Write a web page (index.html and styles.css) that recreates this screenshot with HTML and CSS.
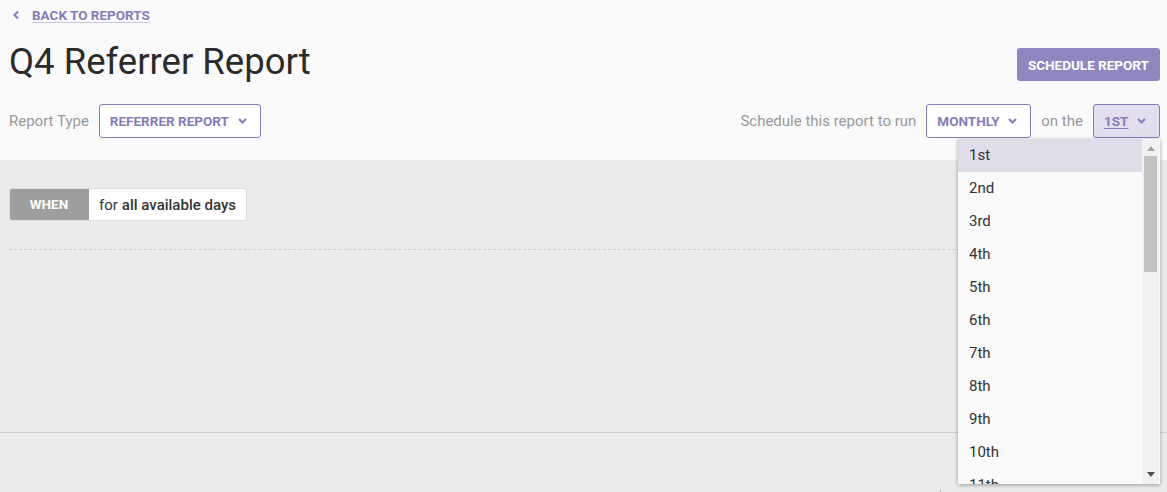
FILE: index.html
```html
<!DOCTYPE html>
<html>
<head>
<meta charset="utf-8">
<link rel="stylesheet" href="styles.css">
</head>
<body>
<div class="page">
  <header class="header">
    <a class="back" href="#">
      <svg class="back-icon" width="8" height="10" viewBox="0 0 8 10"><path d="M6 1.5L2.5 5 6 8.5" fill="none" stroke="#877cb9" stroke-width="2"/></svg>
      <span class="back-text">BACK TO REPORTS</span>
    </a>
    <div class="title-row">
      <h1 class="title">Q4 Referrer Report</h1>
      <button class="btn-primary">SCHEDULE REPORT</button>
    </div>
    <div class="controls">
      <div class="control-group">
        <span class="label">Report Type</span>
        <div class="select select-type">
          <span>REFERRER REPORT</span>
          <svg class="chev" width="9" height="6" viewBox="0 0 9 6"><path d="M1 1l3.5 3.5L8 1" fill="none" stroke="#877cb9" stroke-width="2"/></svg>
        </div>
      </div>
      <div class="control-group">
        <span class="label">Schedule this report to run</span>
        <div class="select select-month">
          <span>MONTHLY</span>
          <svg class="chev" width="9" height="6" viewBox="0 0 9 6"><path d="M1 1l3.5 3.5L8 1" fill="none" stroke="#877cb9" stroke-width="2"/></svg>
        </div>
        <span class="label">on the</span>
        <div class="anchor">
          <div class="select select-day">
            <span class="underline">1ST</span>
            <svg class="chev" width="9" height="6" viewBox="0 0 9 6"><path d="M1 1l3.5 3.5L8 1" fill="none" stroke="#877cb9" stroke-width="2"/></svg>
          </div>
          <div class="dropdown">
            <ul class="options">
              <li class="option active">1st</li>
              <li class="option">2nd</li>
              <li class="option">3rd</li>
              <li class="option">4th</li>
              <li class="option">5th</li>
              <li class="option">6th</li>
              <li class="option">7th</li>
              <li class="option">8th</li>
              <li class="option">9th</li>
              <li class="option">10th</li>
              <li class="option">11th</li>
            </ul>
            <div class="scrollbar">
              <svg class="arrow arrow-up" width="8" height="5" viewBox="0 0 8 5"><path d="M0 5L4 0 8 5z" fill="#a3a3a3"/></svg>
              <div class="thumb"></div>
              <div class="track-fill"></div>
              <svg class="arrow arrow-down" width="8" height="5" viewBox="0 0 8 5"><path d="M0 0L4 5 8 0z" fill="#505050"/></svg>
            </div>
          </div>
        </div>
      </div>
    </div>
  </header>
  <main class="body">
    <div class="when">
      <span class="when-tag">WHEN</span>
      <span class="when-text">for <strong>all available days</strong></span>
    </div>
    <div class="dashed"></div>
    <div class="spacer"></div>
    <div class="solid"></div>
    <div class="tick"></div>
  </main>
</div>
</body>
</html>
```
FILE: styles.css
```css
* { box-sizing: border-box; }
html, body { margin: 0; padding: 0; }
body {
  font-family: Roboto, "Noto Sans", sans-serif;
  color: #333;
  background: #ebebeb;
  width: 1167px;
  height: 492px;
  overflow: hidden;
}
.header {
  background: #fafafa;
  height: 160px;
  padding: 7px 7px 0 9px;
}
.back {
  display: flex;
  align-items: center;
  height: 16px;
  text-decoration: none;
  color: #877cb9;
}
.back-icon { margin-left: 3px; margin-right: 12px; }
.back-text {
  font-size: 13.5px;
  font-weight: 700;
  border-bottom: 1px solid #c9c3e0;
  line-height: 14px;
}
.title-row {
  display: flex;
  justify-content: space-between;
  align-items: flex-start;
  margin-top: 18px;
  height: 47px;
}
.title {
  margin: 0;
  font-size: 36.5px;
  font-weight: 400;
  line-height: 42px;
  color: #2b2b2b;
}
.btn-primary {
  margin-top: 7px;
  height: 33px;
  padding: 0 11px;
  border: none;
  border-radius: 3px;
  background: #9087c0;
  color: #fff;
  font-family: Roboto, sans-serif;
  font-size: 13.5px;
  font-weight: 700;
}
.controls {
  display: flex;
  justify-content: space-between;
  align-items: center;
  margin-top: 16px;
}
.control-group {
  display: flex;
  align-items: center;
  gap: 10px;
}
.label {
  font-size: 15px;
  color: #999;
}
.select {
  display: flex;
  align-items: center;
  justify-content: space-between;
  height: 34px;
  border: 1px solid #877cb9;
  border-radius: 3px;
  background: #fff;
  color: #877cb9;
  font-size: 13.5px;
  font-weight: 700;
  padding: 0 13px 1px 10px;
}
.select-type { width: 162px; }
.select-month { width: 105px; }
.select-day { width: 67px; background: #e2deed; }
.underline { text-decoration: underline; text-underline-offset: 2px; }
.anchor { position: relative; }
.dropdown {
  position: absolute;
  top: 35px;
  right: 0;
  width: 202px;
  height: 345px;
  background: #fafafa;
  box-shadow: 0 1px 4px rgba(0,0,0,0.35);
  display: flex;
  z-index: 10;
}
.options {
  list-style: none;
  margin: 0;
  padding: 0;
  flex: 1;
  overflow: hidden;
}
.option {
  height: 33px;
  line-height: 33px;
  padding-left: 11px;
  font-size: 15px;
  color: #333;
}
.option.active { background: #e0dce9; }
.scrollbar {
  width: 17px;
  margin-right: 1px;
  background: #f1f1f1;
  display: flex;
  flex-direction: column;
  align-items: center;
}
.arrow { flex: none; }
.arrow-up { margin: 7px 0 5px; }
.arrow-down { margin: 6px 0 7px; }
.thumb {
  width: 13px;
  height: 116px;
  background: #c1c1c1;
}
.track-fill { flex: 1; }
.body {
  padding: 28px 7px 0 9px;
}
.when {
  display: inline-flex;
  height: 33px;
  border-radius: 3px;
  overflow: hidden;
  border: 1px solid #ddd;
  background: #fff;
}
.when-tag {
  width: 80px;
  background: #9e9e9e;
  color: #fff;
  font-size: 13.5px;
  font-weight: 700;
  display: flex;
  align-items: center;
  justify-content: center;
  margin: -1px 0 -1px -1px;
  padding-bottom: 1px;
}
.when-text {
  display: flex;
  align-items: center;
  padding: 0 10px;
  font-size: 15px;
  color: #333;
}
.when-text strong { font-weight: 500; margin-left: 4px; }
.dashed {
  margin-top: 28px;
  border-top: 1px dashed #cfcfcf;
}
.spacer { height: 182px; }
.solid {
  margin: 0 -7px 0 -9px;
  border-top: 1px solid #d0d0d0;
}
.tick {
  margin: 56px 0 0 931px;
  width: 1px;
  height: 10px;
  background: #bbb;
}
```
